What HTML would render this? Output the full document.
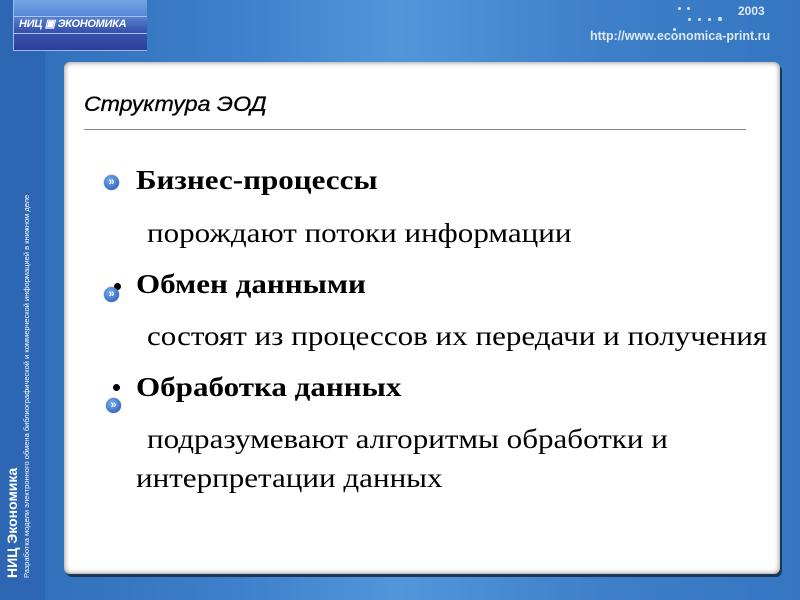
<!DOCTYPE html>
<html><head><meta charset="utf-8"><style>
body{margin:0;width:800px;height:600px;overflow:hidden;position:relative;font-family:"Liberation Sans",sans-serif;
background:linear-gradient(90deg,#2f6db8 0%,#3e80cb 30%,#5197da 50%,#3e7fc9 75%,#3576c2 100%);}
.strip{position:absolute;left:0;top:0;width:45px;height:600px;background:#2d66b2;}
.logo{position:absolute;left:13px;top:0;width:133px;height:50px;background:linear-gradient(#74a6e6 0%,#5a88d8 30%,#3b56b0 60%,#2c3f9a 100%);border-left:1px solid #9ab8ea;border-bottom:1px solid #9ab8ea}
.logo .ln{position:absolute;left:0;width:133px;height:1px;background:#a9c1ee}
.logo span{position:absolute;left:5px;top:17px;color:#fff;font-weight:bold;font-style:italic;font-size:11px;white-space:nowrap;letter-spacing:-0.3px}
.panel{position:absolute;left:64px;top:62px;width:716px;height:512px;background:#fff;border-radius:6px;
box-shadow:2px 3px 0 #1d3556,0 0 6px rgba(0,0,0,.5) inset;}
h1{position:absolute;left:84px;top:93px;margin:0;font-size:21px;font-style:italic;font-weight:normal;color:#000;transform:scaleX(1.1);transform-origin:0 0;-webkit-text-stroke:0.3px #000}
.hr{position:absolute;left:84px;top:129px;width:662px;height:1px;background:#888}
.t{position:absolute;font-family:"Liberation Serif",serif;font-size:27px;color:#000;white-space:nowrap;transform:scaleX(1.15);transform-origin:0 0}
.b{font-weight:bold}
.ic{position:absolute;width:15px;height:15px;border-radius:50%;background:radial-gradient(circle at 40% 35%,#7ab0f2,#1b4fae);color:#fff;font-size:11px;line-height:14px;text-align:center;font-weight:bold;box-shadow:0 0 1px #333}
.dot{position:absolute;width:7px;height:7px;border-radius:50%;background:#000}
.url{position:absolute;left:590px;top:29px;color:#dbe8f8;font-size:12.5px;font-weight:bold}
.yr{position:absolute;left:738px;top:4px;color:#dbe8f8;font-size:12px;font-weight:bold}
.sd{position:absolute;width:3px;height:3px;border-radius:50%;background:#d8e6f8}
.vt{position:absolute;left:4px;top:578px;transform:rotate(-90deg);transform-origin:0 0;color:#fff;white-space:nowrap}
</style></head><body>
<div class="strip"></div>
<div class="logo"><div class="ln" style="top:16px"></div><div class="ln" style="top:33px"></div><span>НИЦ ▣ ЭКОНОМИКА</span></div>
<div class="yr">2003</div>
<div class="sd" style="left:678px;top:7px"></div><div class="sd" style="left:687px;top:7px"></div>
<div class="sd" style="left:688px;top:18px"></div><div class="sd" style="left:698px;top:18px"></div><div class="sd" style="left:708px;top:18px"></div><div class="sd" style="left:718px;top:17px;width:4px;height:4px"></div>
<div class="sd" style="left:673px;top:28px"></div>
<div class="url">http://www.economica-print.ru</div>
<div class="vt"><div style="font-size:14px;font-weight:bold">НИЦ Экономика</div><div style="font-size:7.5px;margin-top:2px">Разработка модели электронного обмена библиографической и коммерческой информацией в книжном деле</div></div>
<div class="panel"></div>
<h1>Структура ЭОД</h1>
<div class="hr"></div>
<div class="ic" style="left:104px;top:175px">»</div>
<div class="t b" style="left:136px;top:165px">Бизнес-процессы</div>
<div class="t" style="left:147px;top:218px">порождают потоки информации</div>
<div class="dot" style="left:114px;top:283px"></div>
<div class="ic" style="left:104px;top:287px">»</div>
<div class="t b" style="left:136px;top:269px">Обмен данными</div>
<div class="t" style="left:147px;top:321px">состоят из процессов их передачи и получения</div>
<div class="dot" style="left:113px;top:384px"></div>
<div class="ic" style="left:106px;top:398px">»</div>
<div class="t b" style="left:136px;top:372px">Обработка данных</div>
<div class="t" style="left:147px;top:424px">подразумевают алгоритмы обработки и</div>
<div class="t" style="left:136px;top:463px">интерпретации данных</div>
</body></html>
